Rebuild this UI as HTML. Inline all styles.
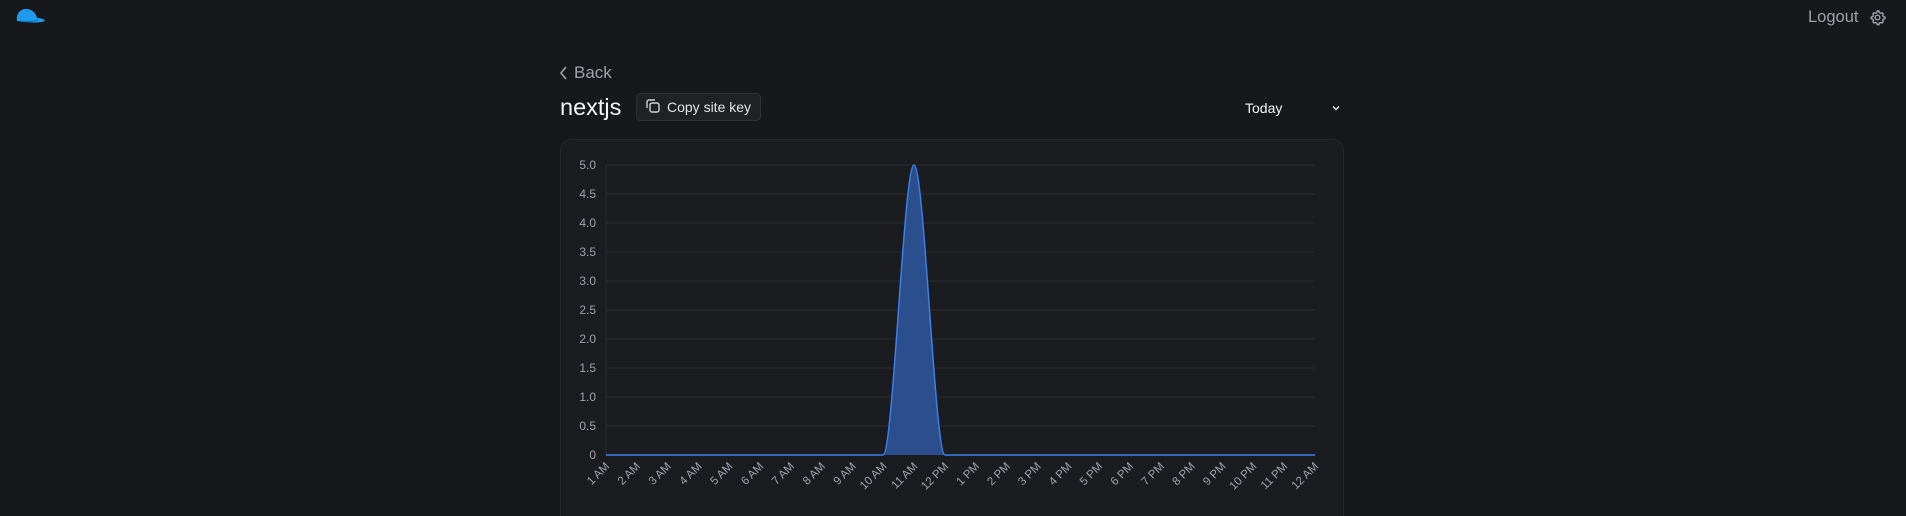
<!DOCTYPE html>
<html><head><meta charset="utf-8"><style>
html,body{margin:0;padding:0;background:#17181b;width:1906px;height:516px;overflow:hidden;font-family:"Liberation Sans",sans-serif;}
#w{position:relative;width:1906px;height:516px;overflow:hidden;}
.abs{position:absolute}
</style></head><body><div id="w">
<svg class="abs" style="left:14px;top:6px" width="34" height="20" viewBox="0 0 34 20">
<path d="M3 15 C2 8 6 3 12 3 C18 3 22 7 23 12 C27 12 30 13 31 15 C26 17 18 17 3 15 Z" fill="#1e9bf0"/>
<path d="M5 15 C10 16 18 16 24 14" stroke="#0b6fc0" stroke-width="1" fill="none"/>
</svg>
<div class="abs" style="left:1808px;top:8px;font-size:16.5px;color:#a1a1aa;">Logout</div>
<svg class="abs" style="left:1869px;top:9px" width="17" height="17" viewBox="0 0 24 24" fill="none" stroke="#a1a1aa" stroke-width="2" stroke-linejoin="round">
<path d="M12 2.5l2 .3.6 2.3 1.6.9 2.3-.7 1.5 1.5-.7 2.3.9 1.6 2.3.6v2.4l-2.3.6-.9 1.6.7 2.3-1.5 1.5-2.3-.7-1.6.9-.6 2.3h-2.4l-.6-2.3-1.6-.9-2.3.7-1.5-1.5.7-2.3-.9-1.6-2.3-.6v-2.4l2.3-.6.9-1.6-.7-2.3 1.5-1.5 2.3.7 1.6-.9.6-2.3z"/>
<circle cx="12" cy="12" r="3.3"/>
</svg>
<svg class="abs" style="left:559px;top:65px" width="10" height="16" viewBox="0 0 10 16"><path d="M7 2 L2 8 L7 14" stroke="#a1a1aa" stroke-width="1.6" fill="none"/></svg>
<div class="abs" style="left:574px;top:63px;font-size:17px;color:#a1a1aa;">Back</div>
<div class="abs" style="left:560px;top:94px;font-size:23.5px;color:#f4f4f5;">nextjs</div>
<div class="abs" style="left:636px;top:93px;width:123px;height:26px;border:1px solid #303136;border-radius:5px;background:#202124;"></div>
<svg class="abs" style="left:645px;top:98px" width="16" height="16" viewBox="0 0 16 16" fill="none" stroke="#d4d4d8" stroke-width="1.4"><rect x="5" y="5" width="9" height="9" rx="2"/><path d="M2 10V4a2 2 0 0 1 2-2h6"/></svg>
<div class="abs" style="left:667px;top:99px;font-size:14px;color:#e4e4e7;">Copy site key</div>
<div class="abs" style="left:1245px;top:100px;font-size:14px;color:#f4f4f5;">Today</div>
<svg class="abs" style="left:1331px;top:103px" width="10" height="10" viewBox="0 0 10 10"><path d="M2 3.5 L5 6.5 L8 3.5" stroke="#e4e4e7" stroke-width="1.4" fill="none"/></svg>
<div class="abs" style="left:560px;top:139px;width:782px;height:400px;border:1px solid #27282c;border-radius:12px;background:#1b1c1f;"></div>
<svg class="abs" style="left:0;top:0" width="1906" height="516">
<g stroke="#2a2b2f" stroke-width="1">
<line x1="606" x2="1315" y1="165" y2="165"/><line x1="606" x2="1315" y1="194" y2="194"/><line x1="606" x2="1315" y1="223" y2="223"/><line x1="606" x2="1315" y1="252" y2="252"/><line x1="606" x2="1315" y1="281" y2="281"/><line x1="606" x2="1315" y1="310" y2="310"/><line x1="606" x2="1315" y1="339" y2="339"/><line x1="606" x2="1315" y1="368" y2="368"/><line x1="606" x2="1315" y1="397" y2="397"/><line x1="606" x2="1315" y1="426" y2="426"/>
<line x1="606" x2="606" y1="165" y2="455"/>
</g>
<g font-size="12" fill="#9ca3af" text-anchor="end" font-family="Liberation Sans">
<text x="596" y="169">5.0</text><text x="596" y="198">4.5</text><text x="596" y="227">4.0</text><text x="596" y="256">3.5</text><text x="596" y="285">3.0</text><text x="596" y="314">2.5</text><text x="596" y="343">2.0</text><text x="596" y="372">1.5</text><text x="596" y="401">1.0</text><text x="596" y="430">0.5</text><text x="596" y="459">0</text>
</g>
<path d="M883,455 C893.3,455 903.7,165 914,165 C924.3,165 934.7,455 945,455 Z" fill="#2b4f8c"/>
<path d="M606,455 L883,455 C893.3,455 903.7,165 914,165 C924.3,165 934.7,455 945,455 L1315,455" stroke="#3b7fe8" stroke-width="1.5" fill="none"/>
<g font-size="11.5" fill="#9ca3af" text-anchor="end" font-family="Liberation Sans" id="xl"></g>
</svg>
</div>
<script>
var l=["1 AM","2 AM","3 AM","4 AM","5 AM","6 AM","7 AM","8 AM","9 AM","10 AM","11 AM","12 PM","1 PM","2 PM","3 PM","4 PM","5 PM","6 PM","7 PM","8 PM","9 PM","10 PM","11 PM","12 AM"];
var g=document.getElementById('xl'),s='';
for(var i=0;i<24;i++){var x=606+i*709/23+4,y=467;s+='<text x="'+x+'" y="'+y+'" transform="rotate(-45 '+x+' '+y+')">'+l[i]+'</text>';}
g.innerHTML=s;
</script>
</body></html>
